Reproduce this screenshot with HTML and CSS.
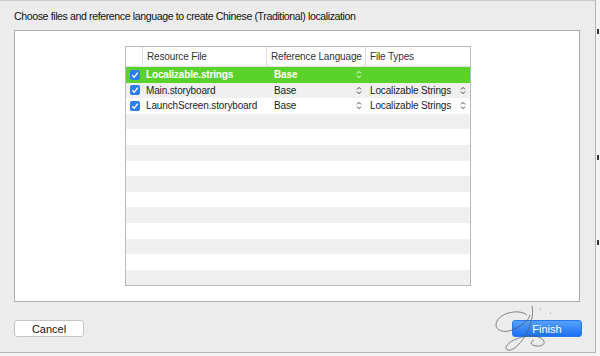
FILE: index.html
```html
<!DOCTYPE html>
<html lang="en">
<head>
    <meta charset="UTF-8">
    <title>Localization</title>
    <link rel="stylesheet" href="styles.css">
</head>
<body>
    <div class="screen">
        <div class="dialog">
            <p class="title">Choose files and reference language to create Chinese (Traditional) localization</p>
            <div class="panel">
                <div class="table">
                    <div class="row head">
                        <div class="cell check"></div>
                        <div class="cell file">Resource File</div>
                        <div class="cell lang">Reference Language</div>
                        <div class="cell type">File Types</div>
                    </div>
                    <div class="row selected">
                        <div class="cell check"><span class="box"><svg viewBox="0 0 10 10"><path d="M2.3 5.2 L4.2 7.2 L7.8 2.6" /></svg></span></div>
                        <div class="cell file">Localizable.strings</div>
                        <div class="cell lang">Base <svg class="step" viewBox="0 0 6 9"><path d="M1 3.4 L3 1.4 L5 3.4 M1 5.6 L3 7.6 L5 5.6" /></svg></div>
                        <div class="cell type"></div>
                    </div>
                    <div class="row odd">
                        <div class="cell check"><span class="box"><svg viewBox="0 0 10 10"><path d="M2.3 5.2 L4.2 7.2 L7.8 2.6" /></svg></span></div>
                        <div class="cell file">Main.storyboard</div>
                        <div class="cell lang">Base <svg class="step" viewBox="0 0 6 9"><path d="M1 3.4 L3 1.4 L5 3.4 M1 5.6 L3 7.6 L5 5.6" /></svg></div>
                        <div class="cell type">Localizable Strings <svg class="step" viewBox="0 0 6 9"><path d="M1 3.4 L3 1.4 L5 3.4 M1 5.6 L3 7.6 L5 5.6" /></svg></div>
                    </div>
                    <div class="row">
                        <div class="cell check"><span class="box"><svg viewBox="0 0 10 10"><path d="M2.3 5.2 L4.2 7.2 L7.8 2.6" /></svg></span></div>
                        <div class="cell file">LaunchScreen.storyboard</div>
                        <div class="cell lang">Base <svg class="step" viewBox="0 0 6 9"><path d="M1 3.4 L3 1.4 L5 3.4 M1 5.6 L3 7.6 L5 5.6" /></svg></div>
                        <div class="cell type">Localizable Strings <svg class="step" viewBox="0 0 6 9"><path d="M1 3.4 L3 1.4 L5 3.4 M1 5.6 L3 7.6 L5 5.6" /></svg></div>
                    </div>
                    <div class="row odd"></div>
                    <div class="row"></div>
                    <div class="row odd"></div>
                    <div class="row"></div>
                    <div class="row odd"></div>
                    <div class="row"></div>
                    <div class="row odd"></div>
                    <div class="row"></div>
                    <div class="row odd"></div>
                    <div class="row"></div>
                    <div class="row odd"></div>
                </div>
            </div>
            <div class="actions">
                <button class="btn">Cancel</button>
                <button class="btn primary">Finish</button>
            </div>
            <!-- signature scribble over the corner -->
            <svg class="scribble" viewBox="0 0 80 56">
                <path d="M37 15 C30 9 12 12 7 21 C3 29 12 34 22 30 C30 27 38 22 40 15" />
                <path d="M42 6 C44 14 41 26 35 36 C29 46 22 51 18 50 C14 49 16 44 24 40 C32 36 44 34 51 38 C57 42 54 47 46 46 C40 45 40 42 44 40" />
                <path d="M50 9 l0.8 0.6 M60 13 l0.8 0.6" />
            </svg>
        </div>
        <div class="edge">
            <span class="mark"></span>
            <span class="mark"></span>
            <span class="mark"></span>
        </div>
    </div>
</body>
</html>
```
FILE: styles.css
```css
body {
    margin: 0;
    background: #f4f4f4;
    font-family: 'Liberation Sans', Arial, sans-serif;
    color: #222;
}
.screen {
    display: flex;
    width: 600px;
    height: 356px;
}
.dialog {
    position: relative;
    width: 595px;
    height: 351px;
    background: #ececec;
    border-top: 1px solid #c9c9c9;
    border-right: 1px solid #b4b4b4;
    border-bottom: 1px solid #b4b4b4;
    display: flex;
    flex-direction: column;
}
.title {
    margin: 0;
    padding: 9px 0 0 14px;
    height: 20px;
    font-size: 10.6px;
    letter-spacing: -0.4px;
    color: #111;
}
.panel {
    margin-left: 14px;
    width: 564px;
    height: 270px;
    background: #fff;
    border: 1px solid #acacac;
    display: flex;
    justify-content: flex-start;
}
.table {
    margin: 15px 0 0 110px;
    width: 344px;
    height: 238px;
    border: 1px solid #b9b9b9;
    display: flex;
    flex-direction: column;
    overflow: hidden;
}
.row {
    display: flex;
    height: 15.6px;
    flex: none;
    font-size: 10px;
    letter-spacing: -0.15px;
    align-items: center;
    background: #fff;
}
.row.odd {
    background: #f0f0f0;
}
.row.head {
    height: 19px;
    background: #fff;
    color: #333;
    border-bottom: 1px solid #e3e3e3;
}
.row.selected {
    background: #5bd22c;
    color: #fff;
}
.cell {
    height: 100%;
    display: flex;
    align-items: center;
    box-sizing: border-box;
    white-space: nowrap;
}
.check {
    width: 17px;
    justify-content: center;
}
.file {
    width: 124px;
    padding-left: 4px;
}
.lang {
    width: 99px;
    padding-left: 4px;
    justify-content: space-between;
    padding-right: 4px;
}
.type {
    flex: 1;
    padding-left: 4px;
    justify-content: space-between;
    padding-right: 4px;
}
.head .file,
.head .lang,
.head .check {
    border-right: 1px solid #dcdcdc;
}
.row:not(.head) .lang {
    padding-left: 7px;
}
.row:not(.head) .file {
    padding-left: 3px;
}
.row.selected .file,
.row.selected .lang {
    font-weight: bold;
}
.box {
    width: 10px;
    height: 10px;
    border-radius: 2px;
    background: #2c7cf4;
    display: flex;
}
.box svg {
    width: 10px;
    height: 10px;
    fill: none;
    stroke: #fff;
    stroke-width: 1.4;
}
.step {
    width: 6px;
    height: 9px;
    fill: none;
    stroke: #444;
    stroke-width: 1;
}
.selected .step {
    stroke: #fff;
}
.actions {
    margin-top: 18px;
    padding: 0 13px 0 14px;
    display: flex;
    justify-content: space-between;
}
.btn {
    width: 70px;
    height: 17px;
    padding: 0;
    font-family: 'Liberation Sans', Arial, sans-serif;
    font-size: 11px;
    border-radius: 3px;
    border: 1px solid #c4c4c4;
    background: #fff;
    color: #111;
}
.btn.primary {
    border-color: #2a78ee;
    background: linear-gradient(#55a2fb, #1a6ff1);
    color: #fff;
}
.scribble {
    position: absolute;
    left: 490px;
    top: 299px;
    width: 80px;
    height: 56px;
    fill: none;
    stroke: #555;
    stroke-width: 0.7;
}
.edge {
    flex: 1;
    display: flex;
    flex-direction: column;
}
.mark {
    width: 2px;
    height: 5px;
    background: #333;
    margin-left: 1px;
}
.mark:nth-child(1) {
    margin-top: 29px;
}
.mark:nth-child(2) {
    margin-top: 121px;
}
.mark:nth-child(3) {
    margin-top: 80px;
}
```
